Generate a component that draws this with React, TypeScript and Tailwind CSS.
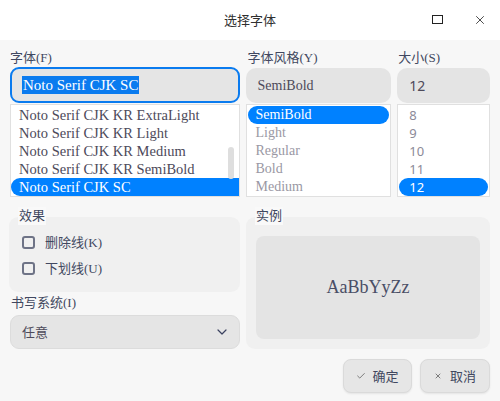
import { Check, ChevronDown, X } from "lucide-react";

const serif = "font-['Liberation_Serif','Noto_Sans_CJK_SC',serif]";
const label = "h-[18px] text-[13px] leading-[18px] text-[#414860] font-['Liberation_Serif','Noto_Sans_CJK_SC',serif]";

const fonts = [
  "Noto Serif CJK KR ExtraLight",
  "Noto Serif CJK KR Light",
  "Noto Serif CJK KR Medium",
  "Noto Serif CJK KR SemiBold",
  "Noto Serif CJK SC",
];
const styles = ["SemiBold", "Light", "Regular", "Bold", "Medium"];
const sizes = ["8", "9", "10", "11", "12"];

const Checkbox = ({ text }: { text: string }) => (
  <div className="flex h-[26px] items-center gap-[10px] pl-[13px]">
    <span className="h-[13px] w-[13px] rounded-[3px] border-2 border-[#6e7386]" />
    <span className={`${label} text-[13.5px]`}>{text}</span>
  </div>
);

export default function App() {
  return (
    <div className="flex h-[401px] w-[500px] flex-col overflow-hidden bg-[#f7f7f7] text-[#414860]">
      <div className="relative flex h-10 shrink-0 items-center justify-center bg-white">
        <span className="text-[13px] text-[#303030] font-['Noto_Sans_CJK_SC',sans-serif]">选择字体</span>
        <span className="absolute left-[432px] top-[15px] h-[9px] w-[11px] border-[1.5px] border-[#222]" />
        <X className="absolute left-[473px] top-[13px] h-[14px] w-[14px] text-[#333]" strokeWidth={1.5} />
      </div>

      <div className="flex flex-1 flex-col px-[10px] pt-[9px]">
        <div className="flex gap-[6px]">
          <div className="flex w-[230px] flex-col">
            <div className={label}>字体(F)</div>
            <div className="flex h-[36px] items-center rounded-[9px] border-2 border-[#0a7bef] bg-[#e5e5e5] px-[10px]">
              <span className={`bg-[#0a7bef] px-px text-[15px] leading-[18px] text-white ${serif}`}>Noto Serif CJK SC</span>
            </div>
            <div className="relative mt-px flex h-[93px] border border-[#e0e0e0] bg-white">
              <div className="flex flex-1 flex-col justify-end">
                {fonts.map((f, i) => (
                  <div
                    key={f}
                    className={`h-[18px] pl-[8px] text-[14.5px] leading-[18px] ${serif} ${
                      i === fonts.length - 1 ? "rounded-l-[9px] bg-[#0081ff] text-white" : "text-[#4d4a5a]"
                    }`}
                  >
                    {f}
                  </div>
                ))}
              </div>
              <span className="absolute right-[5px] top-[42px] h-[32px] w-[6px] rounded-full bg-[#dedede]" />
            </div>
          </div>

          <div className="flex w-[146px] flex-col">
            <div className={`${label} pl-[2px]`}>字体风格(Y)</div>
            <div className={`mt-px flex h-[35px] items-center rounded-[10px] bg-[#e4e4e4] px-[12px] text-[14px] text-[#4d4a5a] ${serif}`}>
              SemiBold
            </div>
            <div className="mt-px flex h-[93px] flex-col border border-[#e0e0e0] bg-white px-px pt-[1px]">
              {styles.map((s, i) => (
                <div
                  key={s}
                  className={`h-[18px] pl-[8px] text-[14px] leading-[18px] ${serif} ${
                    i === 0 ? "rounded-[9px] bg-[#0081ff] text-white" : "text-[#9a98a4]"
                  }`}
                >
                  {s}
                </div>
              ))}
            </div>
          </div>

          <div className="flex w-[93px] flex-col">
            <div className={`${label} pl-[1px]`}>大小(S)</div>
            <div className="mt-px flex h-[35px] items-center rounded-[10px] bg-[#e4e4e4] px-[12px] text-[14px] text-[#4d4a5a] font-['Noto_Sans',sans-serif]">
              12
            </div>
            <div className="mt-px flex h-[93px] flex-col justify-end border border-[#e0e0e0] bg-white px-px">
              {sizes.map((s, i) => (
                <div
                  key={s}
                  className={`h-[18px] pl-[10px] text-[13px] leading-[18px] font-['Noto_Sans',sans-serif] ${
                    i === sizes.length - 1 ? "rounded-[9px] bg-[#0081ff] text-white" : "text-[#8c8a98]"
                  }`}
                >
                  {s}
                </div>
              ))}
            </div>
          </div>
        </div>

        <div className="mt-[10px] flex gap-[6px]">
          <div className="-ml-px flex w-[231px] flex-col">
            <div className="relative z-10 -mb-[8px] ml-[9px] w-fit bg-[#f9f9f9] px-px">
              <div className={label}>效果</div>
            </div>
            <div className="flex h-[75px] flex-col justify-center rounded-[9px] bg-[#f0f0f0] pt-[2px]">
              <Checkbox text="删除线(K)" />
              <Checkbox text="下划线(U)" />
            </div>
            <div className={`${label} ml-[2px] mt-[2px]`}>书写系统(I)</div>
            <div className="ml-px mt-[3px] flex h-[34px] items-center justify-between rounded-[9px] border border-[#dcdcdc] bg-[#e5e5e5] pl-[11px] pr-[9px]">
              <span className="text-[13px] text-[#4d4a5a] font-['Noto_Sans_CJK_SC',sans-serif]">任意</span>
              <ChevronDown className="h-[16px] w-[16px] text-[#3b4260]" strokeWidth={1.8} />
            </div>
          </div>

          <div className="flex flex-1 flex-col">
            <div className="relative z-10 -mb-[8px] ml-[9px] w-fit bg-[#f9f9f9] px-px">
              <div className={label}>实例</div>
            </div>
            <div className="flex h-[132px] flex-col rounded-[9px] bg-[#f0f0f0] px-[10px] pb-[10px] pt-[19px]">
              <div className={`flex flex-1 items-center justify-center rounded-[8px] bg-[#e4e4e4] text-[18px] text-[#4a4e66] ${serif}`}>
                AaBbYyZz
              </div>
            </div>
          </div>
        </div>

        <div className="mt-[10px] flex justify-end gap-[8px]">
          <button className="flex h-[34px] w-[69px] items-center justify-center gap-[6px] rounded-[8px] border border-[#dadada] bg-[#e6e6e6] text-[13px] text-[#414860] font-['Noto_Sans_CJK_SC',sans-serif] shadow-[0_1px_2px_rgba(0,0,0,0.08)]">
            <Check className="h-[10px] w-[10px] text-[#666]" strokeWidth={2} />
            确定
          </button>
          <button className="flex h-[34px] w-[70px] items-center justify-center gap-[8px] rounded-[8px] border border-[#dadada] bg-[#e6e6e6] text-[13px] text-[#414860] font-['Noto_Sans_CJK_SC',sans-serif] shadow-[0_1px_2px_rgba(0,0,0,0.08)]">
            <X className="h-[8px] w-[8px] text-[#666]" strokeWidth={2.5} />
            取消
          </button>
        </div>
      </div>
    </div>
  );
}
